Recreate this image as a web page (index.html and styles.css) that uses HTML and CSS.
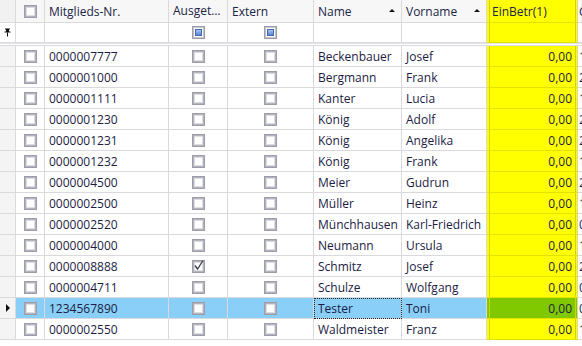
FILE: index.html
```html
<!DOCTYPE html>
<html>
<head>
<meta charset="utf-8">
<link rel="stylesheet" href="styles.css">
</head>
<body>

<div class="grid">
  <!-- column headers -->
  <div class="row head">
    <div class="cell ind"></div>
    <div class="cell center"><span class="box"></span></div>
    <div class="cell">Mitglieds-Nr.</div>
    <div class="cell trunc">Ausgetreten</div>
    <div class="cell">Extern</div>
    <div class="cell sort">Name<span class="arrow"></span></div>
    <div class="cell sort">Vorname<span class="arrow"></span></div>
    <div class="cell money left">EinBetr(1)</div>
    <div class="cell last">Geburtsdatum</div>
  </div>

  <!-- auto filter row -->
  <div class="row filter">
    <div class="cell ind">
      <svg class="pin" width="7" height="9" viewBox="0 0 7 9">
        <path d="M1 0.5h5v1h-1v2h1.5v1h-6v-1h1.5v-2h-1z" fill="#111"/>
        <rect x="3" y="4.5" width="1" height="4" fill="#111"/>
      </svg>
    </div>
    <div class="cell"></div>
    <div class="cell"></div>
    <div class="cell center"><span class="box any"><span class="fill"></span></span></div>
    <div class="cell center"><span class="box any"><span class="fill"></span></span></div>
    <div class="cell"></div>
    <div class="cell"></div>
    <div class="cell money"></div>
    <div class="cell last"></div>
  </div>

  <div class="sep"></div>

  <div class="row">
    <div class="cell ind"></div>
    <div class="cell center"><span class="box"></span></div>
    <div class="cell">0000007777</div>
    <div class="cell center"><span class="box"></span></div>
    <div class="cell center"><span class="box"></span></div>
    <div class="cell">Beckenbauer</div>
    <div class="cell">Josef</div>
    <div class="cell money">0,00</div>
    <div class="cell last">11.09.1945</div>
  </div>
  <div class="row">
    <div class="cell ind"></div>
    <div class="cell center"><span class="box"></span></div>
    <div class="cell">0000001000</div>
    <div class="cell center"><span class="box"></span></div>
    <div class="cell center"><span class="box"></span></div>
    <div class="cell">Bergmann</div>
    <div class="cell">Frank</div>
    <div class="cell money">0,00</div>
    <div class="cell last">23.04.1970</div>
  </div>
  <div class="row">
    <div class="cell ind"></div>
    <div class="cell center"><span class="box"></span></div>
    <div class="cell">0000001111</div>
    <div class="cell center"><span class="box"></span></div>
    <div class="cell center"><span class="box"></span></div>
    <div class="cell">Kanter</div>
    <div class="cell">Lucia</div>
    <div class="cell money">0,00</div>
    <div class="cell last">14.02.1981</div>
  </div>
  <div class="row">
    <div class="cell ind"></div>
    <div class="cell center"><span class="box"></span></div>
    <div class="cell">0000001230</div>
    <div class="cell center"><span class="box"></span></div>
    <div class="cell center"><span class="box"></span></div>
    <div class="cell">König</div>
    <div class="cell">Adolf</div>
    <div class="cell money">0,00</div>
    <div class="cell last">21.06.1950</div>
  </div>
  <div class="row">
    <div class="cell ind"></div>
    <div class="cell center"><span class="box"></span></div>
    <div class="cell">0000001231</div>
    <div class="cell center"><span class="box"></span></div>
    <div class="cell center"><span class="box"></span></div>
    <div class="cell">König</div>
    <div class="cell">Angelika</div>
    <div class="cell money">0,00</div>
    <div class="cell last">27.11.1955</div>
  </div>
  <div class="row">
    <div class="cell ind"></div>
    <div class="cell center"><span class="box"></span></div>
    <div class="cell">0000001232</div>
    <div class="cell center"><span class="box"></span></div>
    <div class="cell center"><span class="box"></span></div>
    <div class="cell">König</div>
    <div class="cell">Frank</div>
    <div class="cell money">0,00</div>
    <div class="cell last">12.03.1979</div>
  </div>
  <div class="row">
    <div class="cell ind"></div>
    <div class="cell center"><span class="box"></span></div>
    <div class="cell">0000004500</div>
    <div class="cell center"><span class="box"></span></div>
    <div class="cell center"><span class="box"></span></div>
    <div class="cell">Meier</div>
    <div class="cell">Gudrun</div>
    <div class="cell money">0,00</div>
    <div class="cell last">28.08.1962</div>
  </div>
  <div class="row">
    <div class="cell ind"></div>
    <div class="cell center"><span class="box"></span></div>
    <div class="cell">0000002500</div>
    <div class="cell center"><span class="box"></span></div>
    <div class="cell center"><span class="box"></span></div>
    <div class="cell">Müller</div>
    <div class="cell">Heinz</div>
    <div class="cell money">0,00</div>
    <div class="cell last">19.05.1948</div>
  </div>
  <div class="row">
    <div class="cell ind"></div>
    <div class="cell center"><span class="box"></span></div>
    <div class="cell">0000002520</div>
    <div class="cell center"><span class="box"></span></div>
    <div class="cell center"><span class="box"></span></div>
    <div class="cell">Münchhausen</div>
    <div class="cell">Karl-Friedrich</div>
    <div class="cell money">0,00</div>
    <div class="cell last">01.12.1920</div>
  </div>
  <div class="row">
    <div class="cell ind"></div>
    <div class="cell center"><span class="box"></span></div>
    <div class="cell">0000004000</div>
    <div class="cell center"><span class="box"></span></div>
    <div class="cell center"><span class="box"></span></div>
    <div class="cell">Neumann</div>
    <div class="cell">Ursula</div>
    <div class="cell money">0,00</div>
    <div class="cell last">16.07.1966</div>
  </div>
  <div class="row">
    <div class="cell ind"></div>
    <div class="cell center"><span class="box"></span></div>
    <div class="cell">0000008888</div>
    <div class="cell center">
      <span class="box">
        <svg class="tick" width="13" height="13" viewBox="0 0 13 13">
          <path d="M3 6.5l2.5 3.5l5.5-8.5" fill="none" stroke="#3a3a4a" stroke-width="1.3"/>
        </svg>
      </span>
    </div>
    <div class="cell center"><span class="box"></span></div>
    <div class="cell">Schmitz</div>
    <div class="cell">Josef</div>
    <div class="cell money">0,00</div>
    <div class="cell last">22.10.1958</div>
  </div>
  <div class="row">
    <div class="cell ind"></div>
    <div class="cell center"><span class="box"></span></div>
    <div class="cell">0000004711</div>
    <div class="cell center"><span class="box"></span></div>
    <div class="cell center"><span class="box"></span></div>
    <div class="cell">Schulze</div>
    <div class="cell">Wolfgang</div>
    <div class="cell money">0,00</div>
    <div class="cell last">03.01.1960</div>
  </div>
  <div class="row sel">
    <div class="cell ind"><span class="marker"></span></div>
    <div class="cell center"><span class="box"></span></div>
    <div class="cell">1234567890</div>
    <div class="cell center"><span class="box"></span></div>
    <div class="cell center"><span class="box"></span></div>
    <div class="cell focus">Tester</div>
    <div class="cell">Toni</div>
    <div class="cell money">0,00</div>
    <div class="cell last">01.01.1990</div>
  </div>
  <div class="row">
    <div class="cell ind"></div>
    <div class="cell center"><span class="box"></span></div>
    <div class="cell">0000002550</div>
    <div class="cell center"><span class="box"></span></div>
    <div class="cell center"><span class="box"></span></div>
    <div class="cell">Waldmeister</div>
    <div class="cell">Franz</div>
    <div class="cell money">0,00</div>
    <div class="cell last">15.09.1971</div>
  </div>
</div>

</body>
</html>
```

FILE: styles.css
```css
* {
  box-sizing: border-box;
}

body {
  margin: 0;
  background: #fff;
  font-family: "Open Sans", "Noto Sans", sans-serif;
  font-size: 12px;
  color: #1c1c44;
  overflow: hidden;
}

.grid {
  width: 582px;
  overflow: hidden;
}

/* every row uses the same column widths */
.row {
  display: grid;
  grid-template-columns: 16px 29px 124px 59px 86px 88px 85px 91px 100px;
  height: 21px;
}

.cell {
  display: flex;
  align-items: center;
  padding-left: 4px;
  border-right: 1px solid #d9d9de;
  border-bottom: 1px solid #d9d9de;
  white-space: nowrap;
  overflow: hidden;
}

.center {
  justify-content: center;
  padding-left: 0;
}

/* header */
.head {
  height: 23px;
}

.head .cell {
  background: #f7f7f8;
  color: #1a2446;
}

.head .cell.money {
  background: #ff0;
}

.head .cell.trunc {
  display: block;
  line-height: 22px;
  padding-right: 2px;
  text-overflow: ellipsis;
}

.sort {
  justify-content: space-between;
  padding-right: 6px;
}

.arrow {
  width: 0;
  height: 0;
  border-left: 3px solid transparent;
  border-right: 3px solid transparent;
  border-bottom: 3px solid #111;
  margin-top: -1px;
}

/* filter row */
.filter {
  height: 20px;
}

.sep {
  height: 3px;
  background: #fff;
  border-top: 1px solid #e4e4e8;
  border-bottom: 1px solid #d9d9de;
}

/* row indicator column */
.ind {
  background: #f4f4f5;
  padding-left: 0;
  justify-content: center;
}

.head .ind {
  background: #f1f1f2;
}

.filter .ind {
  background: #fff;
}

.pin {
  display: block;
}

.marker {
  width: 0;
  height: 0;
  border-top: 4px solid transparent;
  border-bottom: 4px solid transparent;
  border-left: 4px solid #111;
  margin-left: 1px;
}

/* check boxes */
.box {
  position: relative;
  display: block;
  width: 13px;
  height: 13px;
  border: 1px solid #9d9da9;
  background: #fff;
  box-shadow: inset 0 0 0 1px #b4b4be, inset 0 0 0 2px #dcdce3;
}

.box.any {
  padding: 2px;
  box-shadow: inset 0 0 0 1px #c6c6ce;
}

.fill {
  display: block;
  width: 7px;
  height: 7px;
  border: 1px solid #3f68b6;
  background: linear-gradient(#a9c4f0, #5b86d4);
}

.tick {
  position: absolute;
  left: -1px;
  top: -2px;
}

/* highlighted amount column */
.money {
  background: #ff0;
  justify-content: flex-end;
  padding-right: 5px;
  border-bottom-color: #e2e200;
  border-right-color: #d9d9b0;
  box-shadow: inset 2px 0 0 #ff0, inset 3px 0 0 #d4d400, inset -1px 0 0 #ff0, inset -2px 0 0 #d4d400;
}

.money.left {
  justify-content: flex-start;
  padding-left: 5px;
}

.last {
  padding-left: 1px;
  border-right: 0;
}

/* selected row */
.sel .cell {
  background: #89cff8;
}

.sel .ind {
  background: #f4f4f5;
}

.sel .money {
  background: #80c800;
  box-shadow: inset 2px 0 0 #80c800, inset 3px 0 0 #c8d800, inset -1px 0 0 #80c800, inset -2px 0 0 #c8d800;
}

.sel .last {
  background: #fff;
}

.focus {
  outline: 1px dotted #222;
  outline-offset: -1px;
}
```
